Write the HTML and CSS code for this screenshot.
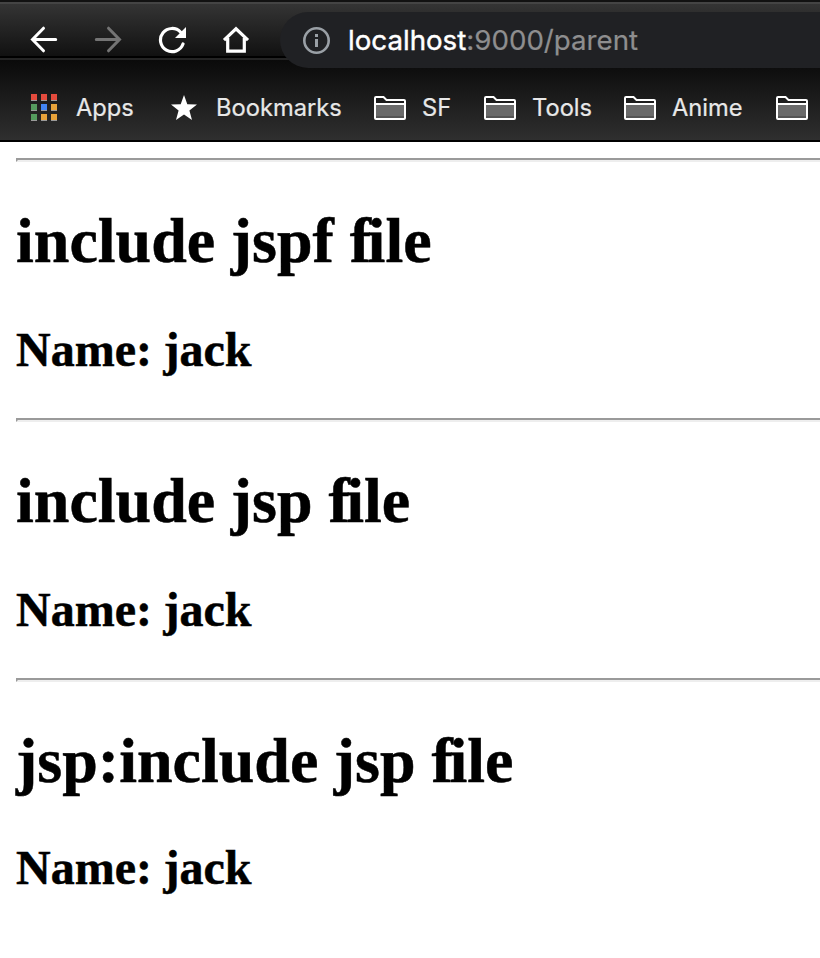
FILE: index.html
```html
<!DOCTYPE html>
<html lang="en">
<head>
<meta charset="utf-8">
<title>localhost:9000/parent</title>
<link rel="stylesheet" href="styles.css">
</head>
<body>
<svg class="defs" aria-hidden="true">
  <symbol id="folder" viewBox="0 0 32 26">
    <rect x="2" y="9" width="28" height="12" fill="#6a6a6a"/>
    <rect x="2" y="21" width="28" height="2" fill="#555"/>
    <path d="M1 23V3Q1 2 2 2H9.5L12.5 5H30Q31 5 31 6V23Q31 24 30 24H2Q1 24 1 23ZM1 9H31" fill="none" stroke="#fff" stroke-width="2"/>
  </symbol>
</svg>
<header class="browser">
  <div class="toolbar">
    <svg class="nav" viewBox="0 0 28 28"><path d="M25.7 13.5H3M13.5 2.2L2.5 13.5L13.5 24.8" fill="none" stroke="#fff" stroke-width="3" stroke-linecap="round"/></svg>
    <svg class="nav" viewBox="0 0 28 28"><path d="M2.3 13.5H25M14.5 2.2L25.5 13.5L14.5 24.8" fill="none" stroke="#747474" stroke-width="3" stroke-linecap="round"/></svg>
    <svg class="nav" viewBox="0 0 28 28"><path d="M22.7 6.3A11.6 11.6 0 1 0 25 18" fill="none" stroke="#fff" stroke-width="3.2" stroke-linecap="round"/><path d="M28 1V12H17Z" fill="#fff"/></svg>
    <svg class="nav" viewBox="0 0 28 28"><path d="M2 14.2L14 2.8L26 14.2M5.7 12V25.2H22.3V12" fill="none" stroke="#fff" stroke-width="3.2"/></svg>
    <div class="address">
      <svg class="info" viewBox="0 0 28 28"><circle cx="14.5" cy="14.5" r="12.2" fill="none" stroke="#9aa0a6" stroke-width="2.6"/><path d="M13 8h3v3h-3zM13 13h3v8h-3z" fill="#9aa0a6"/></svg>
      <span class="url"><b>localhost</b>:9000/parent</span>
    </div>
  </div>
  <nav class="bookmarks">
    <div class="item apps">
      <svg class="grid" viewBox="0 0 26 28">
        <path d="M0 6h6v1H0zM10 6h6v1h-6zM20 6h6v1h-6zM0 16h6v1H0zM10 16h6v1h-6zM20 16h6v1h-6zM0 26h6v1H0zM10 26h6v1h-6zM20 26h6v1h-6z" fill="#999"/>
        <path d="M0 0h6v6H0zM10 0h6v6h-6zM20 0h6v6h-6z" fill="#e34b3d"/>
        <path d="M0 10h6v6H0zM0 20h6v6H0z" fill="#559b5e"/>
        <path d="M10 10h6v6h-6z" fill="#4285f4"/>
        <path d="M20 10h6v6h-6zM10 20h6v6h-6zM20 20h6v6h-6z" fill="#e8a33a"/>
      </svg><span>Apps</span>
    </div>
    <div class="item marks">
      <svg class="star" viewBox="0 0 26 26"><path d="M13 0L16.3 9.3L26 9.5L18.4 15.6L21 25L13 19.6L5 25L7.6 15.6L0 9.5L9.7 9.3Z" fill="#fff"/></svg><span>Bookmarks</span>
    </div>
    <div class="item sf"><svg class="folder"><use href="#folder"/></svg><span>SF</span></div>
    <div class="item tools"><svg class="folder"><use href="#folder"/></svg><span>Tools</span></div>
    <div class="item anime"><svg class="folder"><use href="#folder"/></svg><span>Anime</span></div>
    <div class="item"><svg class="folder"><use href="#folder"/></svg></div>
  </nav>
</header>
<main>
  <hr>
  <h1>include<span class="j"> </span>jspf <i>f</i>ile</h1>
  <h2>Name:<span class="j"> </span>jack</h2>
  <hr>
  <h1>include<span class="j"> </span>jsp <i>f</i>ile</h1>
  <h2>Name:<span class="j"> </span>jack</h2>
  <hr>
  <h1>jsp:include<span class="j"> </span>jsp <i>f</i>ile</h1>
  <h2 class="last">Name:<span class="j"> </span>jack</h2>
</main>
</body>
</html>
```
FILE: styles.css
```css
* { box-sizing: border-box; }
body {
  margin: 0;
  height: 958px;
  overflow: hidden;
  background: #fff;
  color: #000;
  font-family: "Liberation Serif", "Times New Roman", serif;
}
svg { display: block; flex: none; }
.defs { width: 0; height: 0; position: absolute; }
.browser {
  height: 142px;
  overflow: hidden;
  border-bottom: 2px solid #000;
  background: linear-gradient(#111 0 2px, #444 2px 4px, #343434 4px, #111 56px, #000 56px 58px, #242424 58px 60px, #0a0a0a 60px, #2f2f2f 140px);
  font-family: Inter, "Liberation Sans", sans-serif;
}
.toolbar {
  display: flex;
  align-items: center;
  height: 68px;
  padding: 12px 0 0 30px;
}
.nav { width: 28px; height: 28px; margin-right: 36px; }
.nav:nth-child(4) { margin-right: 30px; }
.address {
  flex: 1;
  display: flex;
  align-items: center;
  height: 56px;
  padding-left: 22px;
  background: #202124;
  border-radius: 28px 0 0 28px;
}
.info { width: 28px; height: 28px; margin-right: 18px; }
.url {
  color: #8e8e8f;
  font-size: 27.7px;
  white-space: nowrap;
  -webkit-text-stroke: 0.2px;
}
.url b { color: #fff; font-weight: 400; -webkit-text-stroke: 0.4px; }
.bookmarks {
  display: flex;
  height: 72px;
  padding-left: 31px;
  color: #e8e8e8;
  font-size: 23.7px;
  -webkit-text-stroke: 0.2px;
}
.item {
  display: flex;
  flex: none;
  align-items: center;
  height: 80px;
  white-space: nowrap;
}
.item span { padding-bottom: 2px; }
.apps { width: 140px; }
.marks { width: 203px; }
.sf { width: 110px; }
.tools { width: 140px; }
.anime { width: 152px; }
.grid { width: 26px; height: 28px; margin-right: 19px; }
.star { width: 26px; height: 26px; margin-right: 19px; }
.folder { width: 32px; height: 26px; margin-right: 16px; }
main { padding: 16px 0 0 16px; }
hr {
  height: 4px;
  margin: 0;
  border: 2px solid;
  border-color: #9a9a9a #eee #eee #9a9a9a;
  border-right: 0;
}
h1, h2 { -webkit-text-stroke: 0.5px #000; }
h1 {
  margin: 0;
  padding-top: 42px;
  font-size: 64px;
  line-height: 74px;
}
h1 i {
  font-style: normal;
  letter-spacing: -3.5px;
}
.j { letter-spacing: -0.5px; }
h2 {
  margin: 0;
  height: 140px;
  padding-top: 45px;
  font-size: 48px;
  line-height: 54px;
}
.last { padding-top: 43px; }
```
